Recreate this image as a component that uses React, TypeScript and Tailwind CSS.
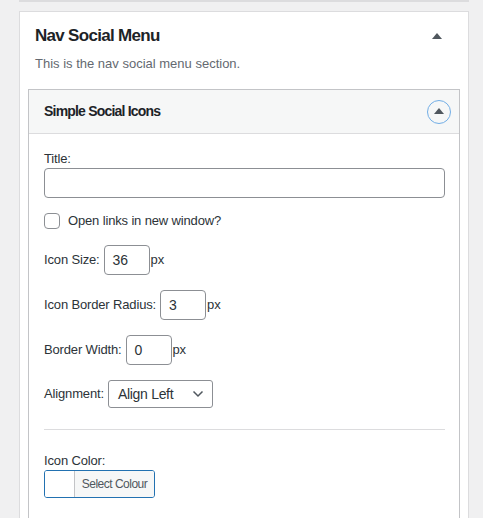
import React from "react";

const Tri = ({ className = "" }: { className?: string }) => (
  <svg width="10" height="6" viewBox="0 0 10 6" className={className}>
    <polygon points="5,0 10,6 0,6" fill="#50575e" />
  </svg>
);

const NumRow = ({ label, value }: { label: string; value: string }) => (
  <div className="flex items-center h-[30px]">
    <span className="mr-[4px]">{label}</span>
    <div className="w-[46px] h-[30px] border border-[#8c8f94] rounded-[4px] bg-white flex items-center pl-[8px] text-[14px] text-[#2c3338]">
      {value}
    </div>
    <span className="ml-[1px]">px</span>
  </div>
);

export default function App() {
  return (
    <div
      className="min-h-[518px] bg-[#f0f0f1] pl-[19px] pr-[14px] text-[13px] tracking-[-0.15px] text-[#2c3338]"
      style={{ fontFamily: '"Liberation Sans", Arial, sans-serif' }}
    >
      <div className="h-[2px] bg-[#dcdcde]" />
      <div className="mt-[9px] bg-white border border-[#dcdcde] border-b-0 min-h-[507px]">
        <div className="pt-[12px] pl-[15px] pr-[26px] flex items-center justify-between h-[24px] box-content">
          <h2 className="text-[17px] font-semibold leading-[24px] tracking-[-0.7px] text-[#1d2327]">Nav Social Menu</h2>
          <Tri />
        </div>
        <p className="pl-[15px] mt-[6px] leading-[20px] tracking-normal text-[#646970]">This is the nav social menu section.</p>
        <div className="mx-[8px] mt-[15px] border border-[#c3c4c7] border-b-0 min-h-[430px]">
          <div className="h-[44px] bg-[#f6f7f7] border-b border-[#dcdcde] flex items-center justify-between pl-[15px] pr-[8px]">
            <span className="text-[14px] font-semibold tracking-[-0.8px] text-[#1d2327]">Simple Social Icons</span>
            <div className="w-[24px] h-[24px] rounded-full border-[1.5px] border-[#72aee6] flex items-center justify-center">
              <Tri className="mb-[1px]" />
            </div>
          </div>
          <div className="pl-[15px] pr-[14px] pt-[16px]">
            <div className="leading-[18px]">Title:</div>
            <div className="h-[30px] border border-[#8c8f94] rounded-[4px] bg-white" />
            <div className="mt-[15px] flex items-center h-[16px]">
              <div className="w-[16px] h-[16px] border border-[#8c8f94] rounded-[4px] bg-white" />
              <span className="ml-[8px]">Open links in new window?</span>
            </div>
            <div className="mt-[16px] flex flex-col gap-[15px]">
              <NumRow label="Icon Size:" value="36" />
              <NumRow label="Icon Border Radius:" value="3" />
              <NumRow label="Border Width:" value="0" />
              <div className="flex items-center h-[28px]">
                <span className="mr-[4px]">Alignment:</span>
                <div className="w-[105px] h-[28px] border border-[#8c8f94] rounded-[3px] bg-white flex items-center justify-between pl-[9px] pr-[8px] text-[14px] tracking-[-0.3px] text-[#2c3338]">
                  <span>Align Left</span>
                  <svg width="12" height="8" viewBox="0 0 12 8">
                    <polyline points="1.5,1.5 6,6 10.5,1.5" fill="none" stroke="#50575e" strokeWidth="1.5" />
                  </svg>
                </div>
              </div>
            </div>
            <div className="mt-[21px] h-px bg-[#dcdcde]" />
            <div className="mt-[22px] leading-[18px]">Icon Color:</div>
            <div className="w-[111px] h-[28px] border border-[#2271b1] rounded-[3px] flex overflow-hidden">
              <div className="w-[30px] bg-white border-r border-[#c3c4c7]" />
              <div className="flex-1 bg-[#f6f7f7] flex items-center justify-center text-[12px] tracking-[-0.5px] text-[#50575e]">
                Select Colour
              </div>
            </div>
          </div>
        </div>
      </div>
    </div>
  );
}
